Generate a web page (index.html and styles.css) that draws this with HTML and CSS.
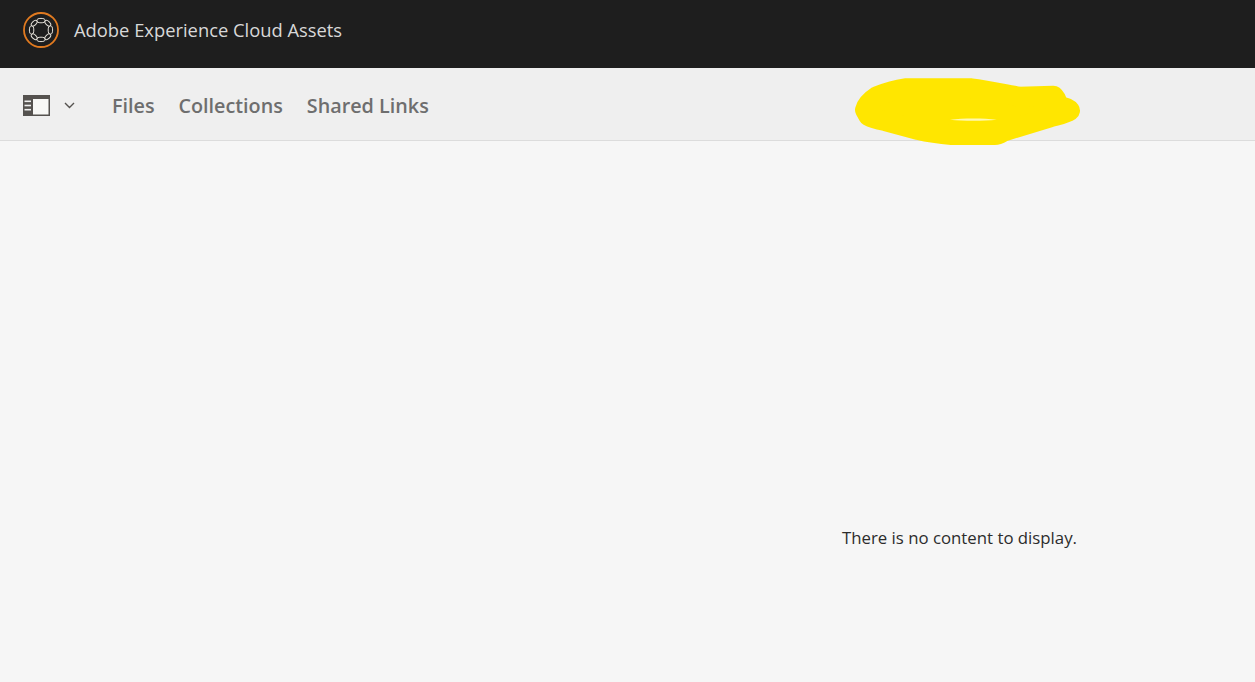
FILE: index.html
```html
<!DOCTYPE html>
<html lang="en">
<head>
    <meta charset="UTF-8">
    <meta name="viewport" content="width=device-width, initial-scale=1.0">
    <title>Adobe Experience Cloud Assets</title>
    <link rel="stylesheet" href="styles.css">
</head>
<body>
    <header class="topbar">
        <svg class="logo" viewBox="0 0 36 36" width="36" height="36" fill="none">
            <circle cx="18" cy="18" r="17" stroke="#e07a20" stroke-width="1.8"/>
            <g stroke="#e4e0d8" stroke-width="1">
                <ellipse cx="18" cy="8.6" rx="4.2" ry="2.2"/>
                <ellipse cx="18" cy="27.4" rx="4.2" ry="2.2"/>
                <ellipse cx="8.6" cy="18" rx="2.2" ry="4.2"/>
                <ellipse cx="27.4" cy="18" rx="2.2" ry="4.2"/>
                <ellipse cx="11.2" cy="11.2" rx="3.6" ry="2" transform="rotate(-45 11.2 11.2)"/>
                <ellipse cx="24.8" cy="11.2" rx="3.6" ry="2" transform="rotate(45 24.8 11.2)"/>
                <ellipse cx="11.2" cy="24.8" rx="3.6" ry="2" transform="rotate(45 11.2 24.8)"/>
                <ellipse cx="24.8" cy="24.8" rx="3.6" ry="2" transform="rotate(-45 24.8 24.8)"/>
            </g>
        </svg>
        <span class="app-title">Adobe Experience Cloud Assets</span>
    </header>

    <nav class="toolbar">
        <button type="button" class="rail-toggle">
            <svg viewBox="0 0 27 21" width="27" height="21">
                <rect x="0" y="0" width="27" height="21" fill="#55524f"/>
                <rect x="10" y="4" width="15.5" height="15.5" fill="#f8f8f6"/>
                <rect x="1.5" y="5.5" width="6.5" height="1.6" fill="#f0f0f0"/>
                <rect x="1.5" y="9.7" width="6.5" height="1.6" fill="#f0f0f0"/>
                <rect x="1.5" y="13.9" width="6.5" height="1.6" fill="#f0f0f0"/>
            </svg>
            <svg class="chevron" viewBox="0 0 11 7" width="11" height="7" fill="none">
                <path d="M1 1l4.5 4.5L10 1" stroke="#55524f" stroke-width="1.4"/>
            </svg>
        </button>
        <a class="nav-link" href="#">Files</a>
        <a class="nav-link" href="#">Collections</a>
        <a class="nav-link" href="#">Shared Links</a>

        <!-- scribble over the account name -->
        <svg class="scribble" viewBox="0 0 780 270" width="260" height="90">
            <path fill="#ffe600" stroke="#ffe600" stroke-width="60" stroke-linejoin="round" d="M75 135C78 122 92 106 112 93C140 82 165 74 195 70L395 70C445 76 495 88 538 95L640 92C650 100 652 112 655 123C672 125 685 130 690 137C675 147 655 150 630 157L490 200C480 206 475 210 465 210L335 210C300 207 265 202 235 195L135 168C115 164 98 160 85 153Z"/>
            <path fill="#fff8b0" d="M330 164C370 159 430 159 470 164C430 168 370 168 330 164Z"/>
        </svg>
    </nav>

    <main class="content">
        <p class="empty-msg">There is no content to display.</p>
    </main>
</body>
</html>
```

FILE: styles.css
```css
html, body {
  height: 100%;
}

body {
  margin: 0;
  display: flex;
  flex-direction: column;
  overflow: hidden;
  font-family: "Open Sans", "Liberation Sans", sans-serif;
  background-color: #f6f6f6;
}

.topbar {
  height: 68px;
  flex-shrink: 0;
  display: flex;
  align-items: center;
  padding-left: 23px;
  padding-bottom: 9px;
  box-sizing: border-box;
  background-color: #1e1e1e;
}

.logo {
  margin-top: 1px;
}

.app-title {
  margin-left: 15px;
  font-size: 18.35px;
  color: #d8d8d8;
}

.toolbar {
  position: relative;
  height: 73px;
  flex-shrink: 0;
  box-sizing: border-box;
  display: flex;
  align-items: center;
  gap: 24px;
  padding-left: 23px;
  padding-top: 2px;
  background-color: #efefef;
  border-bottom: 1px solid #dcdcdc;
}

.rail-toggle {
  display: flex;
  align-items: center;
  gap: 14px;
  width: 65px;
  padding: 0;
  border: none;
  background: none;
}

.nav-link {
  font-size: 19.75px;
  font-weight: 600;
  color: #6e6e6e;
  text-decoration: none;
}

.scribble {
  position: absolute;
  left: 840px;
  top: -3px;
}

.content {
  flex: 1;
  padding: 385px 0 0 842px;
}

.empty-msg {
  margin: 0;
  font-size: 16.8px;
  line-height: 24px;
  color: #2c2c2c;
}
```
